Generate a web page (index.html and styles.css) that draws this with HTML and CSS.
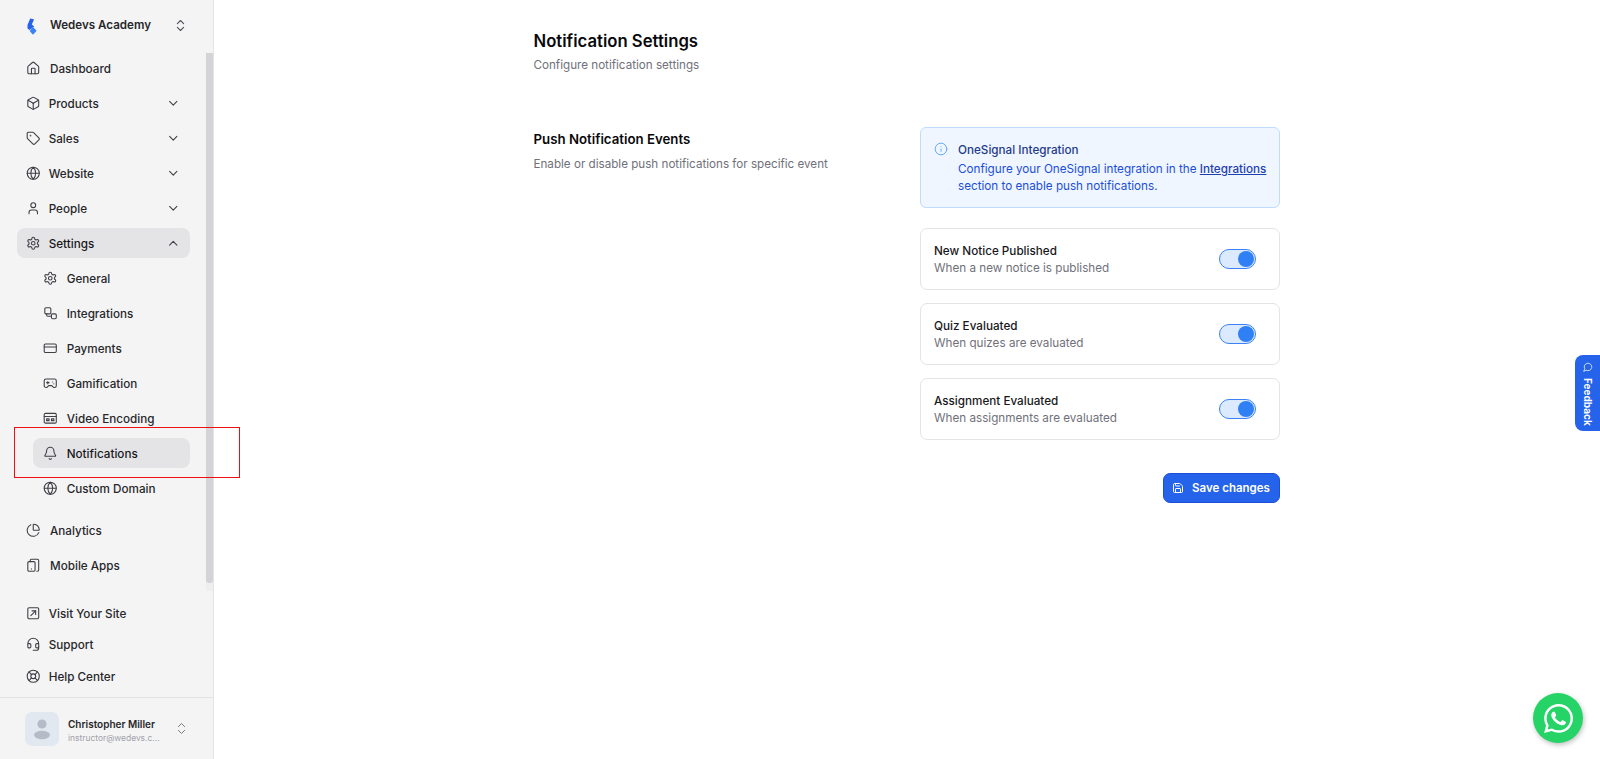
FILE: index.html
```html
<!DOCTYPE html>
<html lang="en">
<head>
<meta charset="utf-8">
<title>Notification Settings</title>
<link rel="stylesheet" href="styles.css">
</head>
<body>
<svg class="sprite" xmlns="http://www.w3.org/2000/svg">
  <symbol id="i-home" viewBox="0 0 24 24"><path d="M15 21v-8a1 1 0 0 0-1-1h-4a1 1 0 0 0-1 1v8"/><path d="M3 10a2 2 0 0 1 .709-1.528l7-5.999a2 2 0 0 1 2.582 0l7 5.999A2 2 0 0 1 21 10v9a2 2 0 0 1-2 2H5a2 2 0 0 1-2-2z"/></symbol>
  <symbol id="i-box" viewBox="0 0 24 24"><path d="M21 8a2 2 0 0 0-1-1.73l-7-4a2 2 0 0 0-2 0l-7 4A2 2 0 0 0 3 8v8a2 2 0 0 0 1 1.73l7 4a2 2 0 0 0 2 0l7-4A2 2 0 0 0 21 16Z"/><path d="m3.3 7 8.7 5 8.7-5"/><path d="M12 22V12"/></symbol>
  <symbol id="i-tag" viewBox="0 0 24 24"><path d="M12.586 2.586A2 2 0 0 0 11.172 2H4a2 2 0 0 0-2 2v7.172a2 2 0 0 0 .586 1.414l8.704 8.704a2.426 2.426 0 0 0 3.42 0l6.58-6.58a2.426 2.426 0 0 0 0-3.42z"/><circle cx="7.5" cy="7.5" r=".5"/></symbol>
  <symbol id="i-globe" viewBox="0 0 24 24"><circle cx="12" cy="12" r="10"/><path d="M12 2a14.5 14.5 0 0 0 0 20 14.5 14.5 0 0 0 0-20"/><path d="M2 12h20"/></symbol>
  <symbol id="i-user" viewBox="0 0 24 24"><path d="M19 21v-2a4 4 0 0 0-4-4H9a4 4 0 0 0-4 4v2"/><circle cx="12" cy="7" r="4"/></symbol>
  <symbol id="i-gear" viewBox="0 0 24 24"><path d="M12.22 2h-.44a2 2 0 0 0-2 2v.18a2 2 0 0 1-1 1.73l-.43.25a2 2 0 0 1-2 0l-.15-.08a2 2 0 0 0-2.73.73l-.22.38a2 2 0 0 0 .73 2.73l.15.1a2 2 0 0 1 1 1.72v.51a2 2 0 0 1-1 1.74l-.15.09a2 2 0 0 0-.73 2.73l.22.38a2 2 0 0 0 2.73.73l.15-.08a2 2 0 0 1 2 0l.43.25a2 2 0 0 1 1 1.73V20a2 2 0 0 0 2 2h.44a2 2 0 0 0 2-2v-.18a2 2 0 0 1 1-1.73l.43-.25a2 2 0 0 1 2 0l.15.08a2 2 0 0 0 2.73-.73l.22-.39a2 2 0 0 0-.73-2.73l-.15-.08a2 2 0 0 1-1-1.74v-.5a2 2 0 0 1 1-1.74l.15-.09a2 2 0 0 0 .73-2.73l-.22-.38a2 2 0 0 0-2.73-.73l-.15.08a2 2 0 0 1-2 0l-.43-.25a2 2 0 0 1-1-1.73V4a2 2 0 0 0-2-2z"/><circle cx="12" cy="12" r="3"/></symbol>
  <symbol id="i-link" viewBox="0 0 24 24"><rect x="3" y="3" width="10" height="10" rx="2"/><rect x="14" y="13" width="8" height="8" rx="2"/><path d="M6 13v2a2 2 0 0 0 2 2h6"/></symbol>
  <symbol id="i-card" viewBox="0 0 24 24"><rect x="2" y="5" width="20" height="14" rx="2"/><path d="M2 10h20"/></symbol>
  <symbol id="i-game" viewBox="0 0 24 24"><path d="M5 5h14a3 3 0 0 1 3 3v8a3 3 0 0 1-3 3h-1.5l-3-3h-5l-3 3H5a3 3 0 0 1-3-3V8a3 3 0 0 1 3-3z"/><path d="M6 11h4M8 9v4"/><path d="M16 10h.01M18 13h.01"/></symbol>
  <symbol id="i-video" viewBox="0 0 24 24"><rect x="2" y="4" width="20" height="16" rx="2"/><path d="M2 9h20"/><rect x="6" y="13" width="4" height="3"/><rect x="14" y="13" width="4" height="3"/></symbol>
  <symbol id="i-bell" viewBox="0 0 24 24"><path d="M10.268 21a2 2 0 0 0 3.464 0"/><path d="M3.262 15.326A1 1 0 0 0 4 17h16a1 1 0 0 0 .74-1.673C19.41 13.956 18 12.499 18 8A6 6 0 0 0 6 8c0 4.499-1.411 5.956-2.738 7.326"/></symbol>
  <symbol id="i-pie" viewBox="0 0 24 24"><path d="M21 12c.552 0 1.005-.449.95-.998a10 10 0 0 0-8.953-8.951c-.55-.055-.998.398-.998.95v8a1 1 0 0 0 1 1z"/><path d="M21.21 15.89A10 10 0 1 1 8 2.83"/></symbol>
  <symbol id="i-mobile" viewBox="0 0 24 24"><rect x="3" y="6" width="12" height="16" rx="2"/><path d="M9 18h.01"/><path d="M7 6V4a2 2 0 0 1 2-2h10a2 2 0 0 1 2 2v16a2 2 0 0 1-2 2h-1"/></symbol>
  <symbol id="i-visit" viewBox="0 0 24 24"><rect x="3" y="3" width="18" height="18" rx="2"/><path d="M8 16 16 8"/><path d="M10 8h6v6"/></symbol>
  <symbol id="i-head" viewBox="0 0 24 24"><path d="M3 11h3a2 2 0 0 1 2 2v3a2 2 0 0 1-2 2H5a2 2 0 0 1-2-2v-5Zm0 0a9 9 0 1 1 18 0m0 0v5a2 2 0 0 1-2 2h-1a2 2 0 0 1-2-2v-3a2 2 0 0 1 2-2h3Z"/><path d="M21 16v2a4 4 0 0 1-4 4h-5"/></symbol>
  <symbol id="i-buoy" viewBox="0 0 24 24"><circle cx="12" cy="12" r="10"/><path d="m4.93 4.93 4.24 4.24"/><path d="m14.83 9.17 4.24-4.24"/><path d="m14.83 14.83 4.24 4.24"/><path d="m9.17 14.83-4.24 4.24"/><circle cx="12" cy="12" r="4"/></symbol>
  <symbol id="i-down" viewBox="0 0 24 24"><path d="m6 9 6 6 6-6"/></symbol>
  <symbol id="i-up" viewBox="0 0 24 24"><path d="m18 15-6-6-6 6"/></symbol>
  <symbol id="i-updown" viewBox="0 0 24 24"><path d="m7 15 5 5 5-5"/><path d="m7 9 5-5 5 5"/></symbol>
  <symbol id="i-info" viewBox="0 0 24 24"><circle cx="12" cy="12" r="10"/><path d="M12 16v-4"/><path d="M12 8h.01"/></symbol>
  <symbol id="i-save" viewBox="0 0 24 24"><path d="M15.2 3a2 2 0 0 1 1.4.6l3.8 3.8a2 2 0 0 1 .6 1.4V19a2 2 0 0 1-2 2H5a2 2 0 0 1-2-2V5a2 2 0 0 1 2-2z"/><path d="M17 21v-7a1 1 0 0 0-1-1H8a1 1 0 0 0-1 1v7"/><path d="M7 3v4a1 1 0 0 0 1 1h7"/></symbol>
  <symbol id="i-chat" viewBox="0 0 24 24"><path d="M7.9 20A9 9 0 1 0 4 16.1L2 22Z"/></symbol>
</svg>

<div class="app">
  <aside class="sidebar">
    <div class="brand">
      <svg class="logo" viewBox="0 0 10 17" aria-hidden="true"><path class="logo-dark" d="M3.2.4 6.6 1.2Q7.1 1.5 6.8 2L4.8 6.5 7.2 8.6 2.6 12 .5 10.5V7z"/><path class="logo-light" d="M6 8.9 9.6 12.7 6 16.7 2.6 12.9z"/></svg>
      <span class="brand-name">Wedevs Academy</span>
      <svg class="ic ic-updown"><use href="#i-updown"/></svg>
    </div>

    <div class="nav-scroll">
      <nav class="nav">
        <a class="item item-wide"><svg class="ic"><use href="#i-home"/></svg><span>Dashboard</span></a>
        <a class="item"><svg class="ic"><use href="#i-box"/></svg><span>Products</span><svg class="ic chev"><use href="#i-down"/></svg></a>
        <a class="item"><svg class="ic"><use href="#i-tag"/></svg><span>Sales</span><svg class="ic chev"><use href="#i-down"/></svg></a>
        <a class="item"><svg class="ic"><use href="#i-globe"/></svg><span>Website</span><svg class="ic chev"><use href="#i-down"/></svg></a>
        <a class="item"><svg class="ic"><use href="#i-user"/></svg><span>People</span><svg class="ic chev"><use href="#i-down"/></svg></a>
        <a class="item active"><svg class="ic"><use href="#i-gear"/></svg><span>Settings</span><svg class="ic chev"><use href="#i-up"/></svg></a>
        <a class="item sub"><svg class="ic"><use href="#i-gear"/></svg><span>General</span></a>
        <a class="item sub"><svg class="ic"><use href="#i-link"/></svg><span>Integrations</span></a>
        <a class="item sub"><svg class="ic"><use href="#i-card"/></svg><span>Payments</span></a>
        <a class="item sub"><svg class="ic"><use href="#i-game"/></svg><span>Gamification</span></a>
        <a class="item sub"><svg class="ic"><use href="#i-video"/></svg><span>Video Encoding</span></a>
        <a class="item sub active"><svg class="ic"><use href="#i-bell"/></svg><span>Notifications</span></a>
        <a class="item sub"><svg class="ic"><use href="#i-globe"/></svg><span>Custom Domain</span></a>
        <a class="item item-wide item-gap"><svg class="ic"><use href="#i-pie"/></svg><span>Analytics</span></a>
        <a class="item item-wide"><svg class="ic"><use href="#i-mobile"/></svg><span>Mobile Apps</span></a>
      </nav>
      <div class="scroll-track"><div class="scroll-thumb"></div></div>
    </div>

    <div class="links">
      <a class="item"><svg class="ic"><use href="#i-visit"/></svg><span>Visit Your Site</span></a>
      <a class="item"><svg class="ic"><use href="#i-head"/></svg><span>Support</span></a>
      <a class="item"><svg class="ic"><use href="#i-buoy"/></svg><span>Help Center</span></a>
    </div>

    <div class="user">
      <div class="avatar">
        <svg viewBox="0 0 34 34" aria-hidden="true"><circle cx="17" cy="12" r="4.6"/><ellipse cx="17" cy="23" rx="8" ry="4.2"/></svg>
      </div>
      <div class="user-text">
        <div class="user-name">Christopher Miller</div>
        <div class="user-mail">instructor@wedevs.c...</div>
      </div>
      <svg class="ic ic-updown user-chev"><use href="#i-updown"/></svg>
    </div>
  </aside>

  <main class="main">
    <div class="content">
      <header class="page-head">
        <h1>Notification Settings</h1>
        <p>Configure notification settings</p>
      </header>
      <section class="section">
        <div class="section-info">
          <h2>Push Notification Events</h2>
          <p>Enable or disable push notifications for specific event</p>
        </div>
        <div class="section-body">
          <div class="alert">
            <svg class="ic alert-icon"><use href="#i-info"/></svg>
            <div>
              <div class="alert-title">OneSignal Integration</div>
              <div class="alert-text">Configure your OneSignal integration in the <a>Integrations</a> section to enable push notifications.</div>
            </div>
          </div>
          <div class="card">
            <div class="card-copy"><div class="card-title">New Notice Published</div><div class="card-sub">When a new notice is published</div></div>
            <div class="switch"><span class="knob"></span></div>
          </div>
          <div class="card">
            <div class="card-copy"><div class="card-title">Quiz Evaluated</div><div class="card-sub">When quizes are evaluated</div></div>
            <div class="switch"><span class="knob"></span></div>
          </div>
          <div class="card">
            <div class="card-copy"><div class="card-title">Assignment Evaluated</div><div class="card-sub">When assignments are evaluated</div></div>
            <div class="switch"><span class="knob"></span></div>
          </div>
          <div class="actions">
            <button class="save" type="button"><svg class="ic"><use href="#i-save"/></svg>Save changes</button>
          </div>
        </div>
      </section>
    </div>
  </main>
</div>

<div class="highlight"></div>
<div class="feedback"><svg class="ic"><use href="#i-chat"/></svg><span>Feedback</span></div>
<div class="whatsapp">
  <svg viewBox="0 0 24 24" aria-hidden="true"><path d="M17.472 14.382c-.297-.149-1.758-.867-2.03-.967-.273-.099-.471-.148-.67.15-.197.297-.767.966-.94 1.164-.173.199-.347.223-.644.075-.297-.15-1.255-.463-2.39-1.475-.883-.788-1.48-1.761-1.653-2.059-.173-.297-.018-.458.13-.606.134-.133.298-.347.446-.52.149-.174.198-.298.298-.497.099-.198.05-.371-.025-.52-.075-.149-.669-1.612-.916-2.207-.242-.579-.487-.5-.669-.51-.173-.008-.371-.01-.57-.01-.198 0-.52.074-.792.372-.272.297-1.04 1.016-1.04 2.479 0 1.462 1.065 2.875 1.213 3.074.149.198 2.096 3.2 5.077 4.487.709.306 1.262.489 1.694.625.712.227 1.36.195 1.871.118.571-.085 1.758-.719 2.006-1.413.248-.694.248-1.289.173-1.413-.074-.124-.272-.198-.57-.347m-5.421 7.403h-.004a9.87 9.87 0 01-5.031-1.378l-.361-.214-3.741.982.998-3.648-.235-.374a9.86 9.86 0 01-1.51-5.26c.001-5.45 4.436-9.884 9.888-9.884 2.64 0 5.122 1.03 6.988 2.898a9.825 9.825 0 012.893 6.994c-.003 5.45-4.437 9.884-9.885 9.884m8.413-18.297A11.815 11.815 0 0012.05 0C5.495 0 .16 5.335.157 11.892c0 2.096.547 4.142 1.588 5.945L.057 24l6.305-1.654a11.882 11.882 0 005.683 1.448h.005c6.554 0 11.89-5.335 11.893-11.893a11.821 11.821 0 00-3.48-8.413z"/></svg>
</div>
</body>
</html>
```

FILE: styles.css
```css
* { box-sizing: border-box; }
html, body { margin: 0; padding: 0; height: 100%; overflow: hidden; }
body { font-family: Inter, "Liberation Sans", sans-serif; background: #fff; color: #18181b; }
.sprite { display: none; }
.ic { width: 15px; height: 15px; flex: none; fill: none; stroke: currentColor; stroke-width: 2; stroke-linecap: round; stroke-linejoin: round; }

.app { display: flex; height: 759px; }
.sidebar { width: 214px; flex: none; background: #f4f4f5; border-right: 1px solid #e4e4e7; display: flex; flex-direction: column; }

.brand { height: 53px; padding: 1px 25px 4px 27px; display: flex; align-items: center; }
.logo { width: 10px; height: 17px; margin-right: 13px; flex: none; margin-top: 2px; }
.logo-dark { fill: #2563eb; }
.logo-light { fill: #3b82f6; }
.brand-name { flex: 1; font-size: 11.6px; font-weight: 600; color: #27272a; }
.ic-updown { color: #52525b; stroke-width: 1.8; }

.nav-scroll { position: relative; height: 538px; flex: none; }
.nav { padding: 0 23px 0 17px; display: flex; flex-direction: column; gap: 5px; }
.item { height: 30px; display: flex; align-items: center; gap: 8.7px; padding: 0 10px 0 8.5px; border-radius: 8px; font-size: 11.7px; font-weight: 500; color: #27272a; }
.item .ic { width: 14.5px; height: 14.5px; color: #3f3f46; stroke-width: 1.8; }
.item span { flex: 1; padding-top: 1px; }
.item-wide { gap: 10px; }
.item-gap { margin-top: 7px; }
.item.active { background: #e4e4e7; color: #18181b; }
.sub { margin-left: 16px; padding-left: 9.5px; gap: 9.7px; }
.chev { color: #3f3f46; }

.scroll-track { position: absolute; right: 0; top: 0; bottom: 0; width: 7px; background: #eeeef0; }
.scroll-thumb { height: 530px; background: #d4d4d8; border-radius: 0 0 3px 3px; }

.links { display: flex; flex-direction: column; gap: 1.5px; padding: 7px 24px 0 17px; height: 107px; flex: none; border-bottom: 1px solid #e4e4e7; }

.user { flex: 1; display: flex; align-items: center; padding: 0 24px 0 25px; }
.avatar { width: 34px; height: 34px; border-radius: 7px; background: #e2e8f0; flex: none; margin-right: 9px; }
.avatar svg { display: block; width: 34px; height: 34px; fill: #b4bcc8; }
.user-text { flex: 1; min-width: 0; padding-top: 4px; }
.user-name { font-size: 10px; font-weight: 600; color: #27272a; line-height: 14px; }
.user-mail { font-size: 8.45px; color: #a1a1aa; line-height: 14px; white-space: nowrap; }
.user-chev { color: #71717a; stroke-width: 1.5; }

.main { flex: 1; min-width: 0; }
.content { width: 747px; margin-left: 319.5px; padding-top: 30px; }
.page-head h1 { margin: 0; font-size: 16.7px; line-height: 22px; font-weight: 600; color: #09090b; }
.page-head p { margin: 5px 0 0; font-size: 11.65px; line-height: 16px; color: #71717a; }

.section { display: flex; margin-top: 54px; }
.section-info { width: 386.5px; flex: none; }
.section-info h2 { margin: 3px 0 0; font-size: 13.25px; line-height: 18px; font-weight: 600; color: #09090b; }
.section-info p { margin: 8px 0 0; font-size: 11.65px; line-height: 16px; color: #71717a; }
.section-body { width: 360px; flex: none; display: flex; flex-direction: column; gap: 13px; }

.alert { height: 81px; margin-bottom: 7px; border: 1px solid #bfdbfe; background: #eff6ff; border-radius: 6px; padding: 14px 6px 0 13px; display: flex; gap: 10px; }
.alert-icon { width: 14px; height: 14px; color: #60a5fa; margin-top: 0; stroke-width: 1.6; }
.alert-title { font-size: 11.7px; line-height: 17px; font-weight: 500; color: #1e3a8a; }
.alert-text { margin-top: 2px; font-size: 11.7px; line-height: 17px; color: #1d4ed8; }
.alert-text a { color: #1e40af; text-decoration: underline; font-weight: 500; }

.card { height: 62px; border: 1px solid #e4e4e7; border-radius: 7px; padding: 0 23px 0 13px; display: flex; align-items: center; justify-content: space-between; }
.card-copy { padding-top: 2px; }
.card-title { font-size: 11.7px; line-height: 17px; font-weight: 500; color: #18181b; }
.card-sub { font-size: 11.7px; line-height: 17px; color: #71717a; }

.switch { width: 37px; height: 20px; border-radius: 10px; border: 1px solid #3b82f6; background: #dbeafe; position: relative; }
.knob { position: absolute; right: 1px; top: 1px; width: 16px; height: 16px; border-radius: 50%; background: #2f7ff5; }

.actions { display: flex; justify-content: flex-end; margin-top: 20px; }
.save { height: 30px; width: 117px; border: 1px solid #1d4ed8; background: #2563eb; color: #fff; border-radius: 7px; font: 600 11.5px Inter, sans-serif; display: flex; align-items: center; justify-content: center; gap: 8px; padding: 0 1px 0 0; }
.save .ic { width: 12px; height: 12px; }

.highlight { position: absolute; left: 14px; top: 427px; width: 226px; height: 51px; border: 1px solid #ee0f0f; pointer-events: none; }

.feedback { position: fixed; right: 0; top: 355px; width: 25px; height: 76px; background: #2563eb; color: #fff; border-radius: 8px 0 0 8px; display: flex; flex-direction: column; align-items: center; padding-top: 7px; gap: 6px; }
.feedback .ic { width: 10px; height: 10px; stroke-width: 1.8; }
.feedback span { writing-mode: vertical-rl; font-size: 10px; font-weight: 700; line-height: 12px; }

.whatsapp { position: fixed; left: 1533px; top: 693px; width: 50px; height: 50px; border-radius: 50%; background: #25d366; display: flex; align-items: center; justify-content: center; box-shadow: 1px 2px 5px rgba(0,0,0,.25); }
.whatsapp svg { width: 29px; height: 29px; fill: #fff; }
```
